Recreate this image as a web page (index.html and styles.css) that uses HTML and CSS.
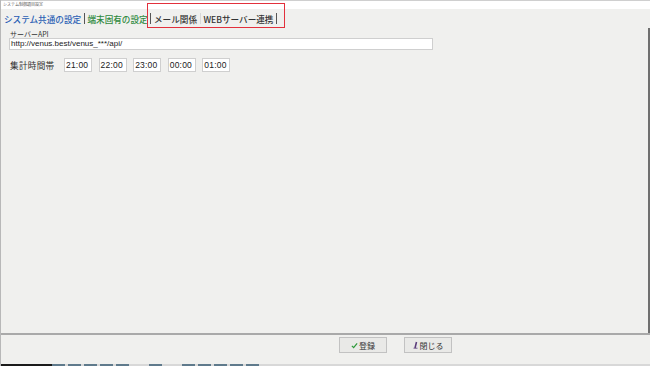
FILE: index.html
```html
<!DOCTYPE html>
<html lang="ja">
<head>
  <meta charset="UTF-8" />
  <title>システム制御項目設定</title>
  <link rel="stylesheet" href="styles.css">
</head>
<body>
  <div class="window">
    <div class="titlebar">システム制御項目設定</div>

    <div class="tabs">
      <span class="tab tab-blue">システム共通の設定</span>
      <span class="sep"></span>
      <span class="tab tab-green">端末固有の設定</span>
      <span class="sep"></span>
      <span class="tab">メール関係</span>
      <span class="sep faint"></span>
      <span class="tab">WEBサーバー連携</span>
      <span class="sep"></span>
      <div class="highlight"></div>
    </div>

    <main class="content">
      <div class="field">
        <label class="small-label">サーバーAPI</label>
        <div class="textbox wide">http://venus.best/venus_***/api/</div>
      </div>

      <div class="times">
        <span class="label">集計時間帯</span>
        <div class="textbox time">21:00</div>
        <div class="textbox time">22:00</div>
        <div class="textbox time">23:00</div>
        <div class="textbox time">00:00</div>
        <div class="textbox time">01:00</div>
      </div>
    </main>

    <footer class="footer">
      <button class="btn">
        <svg width="7" height="7" viewBox="0 0 8 8"><path d="M1 4.5 L3 6.5 L7 1.5" fill="none" stroke="#2f9a3a" stroke-width="1.4"/></svg>
        登録
      </button>
      <button class="btn">
        <svg width="6" height="8" viewBox="0 0 6 8"><path d="M3.5 1 L2 7" stroke="#5b3b7a" stroke-width="1.6"/><path d="M0.5 7.2 H4.5" stroke="#5b3b7a" stroke-width="0.8"/></svg>
        閉じる
      </button>
    </footer>

    <div class="taskbar">
      <span class="dark"></span>
      <span class="blk"></span><span class="blk"></span><span class="blk"></span><span class="blk"></span><span class="blk"></span>
      <span class="blk far"></span>
      <span class="blk far"></span><span class="blk"></span><span class="blk"></span><span class="blk"></span><span class="blk"></span>
    </div>
  </div>
</body>
</html>
```

FILE: styles.css
```css
/* ---- ventana principal ---- */
body {
  margin: 0;
  font-family: "Noto Sans CJK JP", "Noto Sans", sans-serif;
  background: #f0f0ee;
  color: #222;
}

.window {
  width: 650px;
  height: 366px;
  display: flex;
  flex-direction: column;
  overflow: hidden;
  position: relative;
  border-left: 1px solid #b8b8b8;
  box-sizing: border-box;
}

.titlebar {
  height: 8px;
  background: #fff;
  border-top: 1px solid #cfcfcf;
  font-size: 4px;
  line-height: 7px;
  padding-left: 2px;
  color: #555;
}

.tabs {
  height: 19px;
  display: flex;
  align-items: center;
  padding-left: 2px;
  font-size: 8.6px;
  font-weight: 500;
  position: relative;
}

.tab {
  padding: 0 1px;
  color: #333;
  white-space: nowrap;
}

.tab-blue { color: #2b5fb5; }
.tab-green { color: #2f8a3e; }

.sep {
  width: 1px;
  height: 11px;
  background: #555;
  margin: 0 1.7px;
}

.sep.faint { background: #d8d8d8; }

.highlight {
  position: absolute;
  left: 146px;
  top: -6px;
  width: 136px;
  height: 23px;
  border: 1px solid #e2303c;
}

.content {
  flex: 1;
  border-right: 2px solid #6f6f6f;
  padding: 2px 0 0 8px;
}

.field {
  display: flex;
  flex-direction: column;
  width: 424px;
}

.small-label {
  font-size: 7px;
  line-height: 8px;
  padding-left: 1px;
  color: #333;
}

.textbox {
  background: #fff;
  border: 1px solid #cfcfcf;
  font-family: "Liberation Sans", Arial, sans-serif;
  font-size: 8px;
  line-height: 10px;
  padding-left: 1px;
  color: #222;
}

.wide { height: 10px; }

.times {
  display: flex;
  align-items: center;
  gap: 6.6px;
  margin-top: 8px;
}

.label {
  font-size: 8.6px;
  letter-spacing: 0.3px;
  padding-left: 1px;
  width: 48.4px;
  box-sizing: border-box;
  color: #333;
}

.time {
  width: 28px;
  height: 14px;
  box-sizing: border-box;
  line-height: 12px;
  font-size: 8.5px;
  letter-spacing: 0.2px;
}

.footer {
  height: 31px;
  border-top: 2px solid #a9a9a9;
  display: flex;
  align-items: flex-start;
  padding-left: 338px;
  padding-top: 2px;
  box-sizing: border-box;
  gap: 17px;
}

.btn {
  width: 48px;
  height: 16px;
  padding: 0;
  background: #e9e9e7;
  border: 1px solid #c2c2c2;
  font-family: "Noto Sans CJK JP", sans-serif;
  font-size: 8px;
  color: #333;
  display: flex;
  align-items: center;
  justify-content: center;
  gap: 1px;
}

.taskbar {
  height: 2px;
  display: flex;
  background: #d8d8d8;
  margin-left: -1px;
}

.taskbar .dark {
  width: 52px;
  background: #1b1b1b;
}

.taskbar .blk {
  width: 13px;
  margin-right: 3px;
  background: #5f7a8c;
}

.taskbar .blk.far { margin-left: 17px; }
```
